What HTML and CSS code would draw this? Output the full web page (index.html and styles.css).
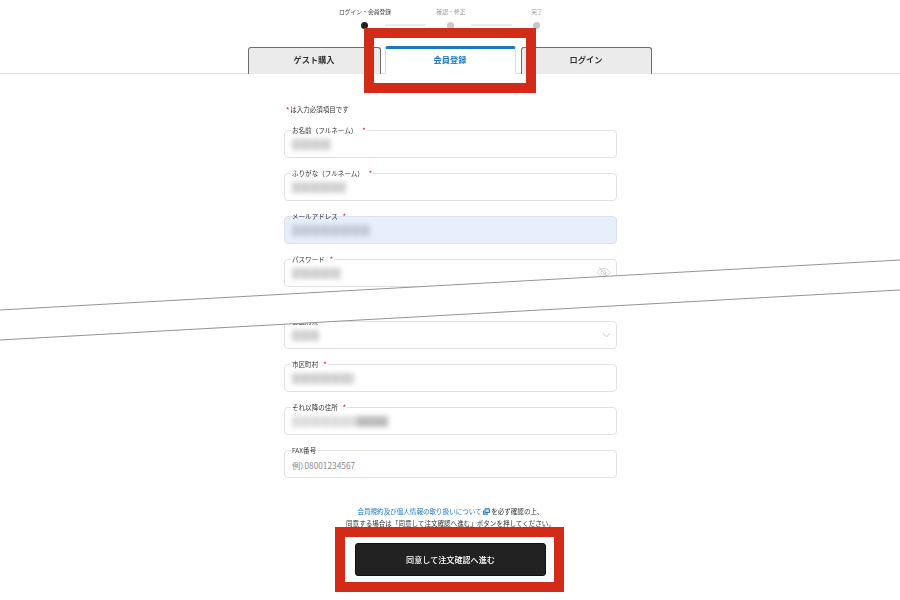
FILE: index.html
```html
<!DOCTYPE html>
<html lang="ja">
<head>
<meta charset="utf-8">
<title>会員登録</title>
<link rel="stylesheet" href="styles.css">
</head>
<body>
<div class="page">
  <div class="steps">
    <div class="step-labels">
      <span class="step-label current">ログイン・会員登録</span>
      <span class="step-label">確認・修正</span>
      <span class="step-label">完了</span>
    </div>
    <div class="step-track">
      <span class="dot current"></span><span class="connector"></span>
      <span class="dot"></span><span class="connector"></span>
      <span class="dot"></span>
    </div>
  </div>

  <div class="tabs">
    <div class="tab tab-guest">ゲスト購入</div>
    <div class="tab tab-active">会員登録</div>
    <div class="tab tab-login">ログイン</div>
  </div>

  <form class="form">
    <p class="note"><span class="req first">*</span>は入力必須項目です</p>

    <div class="field">
      <label class="field-label">お名前（フルネーム）<span class="req gap">*</span></label>
      <div class="smudge s-name"></div>
    </div>
    <div class="field">
      <label class="field-label">ふりがな（フルネーム）<span class="req gap">*</span></label>
      <div class="smudge s-kana"></div>
    </div>
    <div class="field filled">
      <label class="field-label">メールアドレス<span class="req gap">*</span></label>
      <div class="smudge s-mail"></div>
    </div>
    <div class="field">
      <label class="field-label">パスワード<span class="req gap">*</span></label>
      <div class="smudge s-pass"></div>
      <svg class="field-icon eye" viewBox="0 0 16 14" fill="none" stroke="#d0d0d0" stroke-width="1">
        <path d="M1 7c2-3 4.400-4.500 7-4.500S13 4 15 7c-2 3-4.400 4.500-7 4.500S3 10 1 7z"/>
        <circle cx="8" cy="7" r="2.600"/>
        <path d="M3 1l10 12"/>
      </svg>
    </div>

    <div class="field after-cut">
      <label class="field-label">都道府県</label>
      <div class="smudge s-pref"></div>
      <svg class="field-icon chevron" viewBox="0 0 10 6" fill="none" stroke="#bdbdbd" stroke-width="1">
        <path d="M1 1l4 4 4-4"/>
      </svg>
    </div>
    <div class="field">
      <label class="field-label">市区町村<span class="req gap">*</span></label>
      <div class="smudge s-city"></div>
    </div>
    <div class="field">
      <label class="field-label">それ以降の住所<span class="req gap">*</span></label>
      <div class="smudge s-addr"><div class="smudge-dark"></div></div>
    </div>
    <div class="field">
      <label class="field-label">FAX番号</label>
      <span class="placeholder">例）08001234567</span>
    </div>

    <div class="consent">
      <p><a class="consent-link">会員規約及び個人情報の取り扱いについて</a>
        <svg class="ext" viewBox="0 0 8 8" fill="#bcdcf5" stroke="#1a78c2" stroke-width="1.200"><rect x="2.200" y=".8" width="5.200" height="4.400" rx="1"/><path d="M.7 3v4h5" fill="none"/></svg>を必ず確認の上、</p>
      <p>同意する場合は「同意して注文確認へ進む」ボタンを押してください。</p>
    </div>

    <button type="button" class="submit">同意して注文確認へ進む</button>
  </form>
</div>

<div class="mark mark-tab"></div>
<div class="mark mark-button"></div>

<svg class="cut" viewBox="0 0 900 600" width="900" height="600">
  <polygon points="0,310 900,260 900,290 0,340" fill="#fff"/>
  <path d="M0 310L900 260M0 340L900 290" stroke="#949494" stroke-width="1" fill="none"/>
</svg>
</body>
</html>
```
FILE: styles.css
```css
* { box-sizing: border-box; }
html, body { margin: 0; height: 600px; overflow: hidden; background: #fff; }
body { font-family: "Noto Sans CJK JP", "Noto Sans", sans-serif; color: #333; position: relative; }
p { margin: 0; }

.page { display: flex; flex-direction: column; align-items: center; filter: blur(.35px); }

/* stepper */
.steps { width: 258px; padding-top: 8px; height: 46px; margin-left: 2px; }
.step-labels { display: grid; grid-template-columns: repeat(3, 86px); justify-items: center; height: 13px; }
.step-label { font-size: 5.800px; line-height: 8px; color: #999; white-space: nowrap; }
.step-label.current { color: #444; }
.step-track { display: flex; align-items: center; padding-left: 39px; height: 8px; }
.dot { width: 7px; height: 7px; border-radius: 50%; background: #c8c8c8; flex: none; }
.dot.current { background: #222; }
.connector { width: 41px; height: 2px; background: #ececec; margin: 0 21px 0 17px; flex: none; }

/* tabs */
.tabs { width: 100%; display: flex; justify-content: center; align-items: flex-end; height: 28px; border-bottom: 1px solid #e0e0e0; padding-right: 1px; }
.tab { height: 27px; display: flex; align-items: center; justify-content: center; font-size: 8.200px; font-weight: 700; border: 1px solid #6e6e6e; border-bottom: 0; border-radius: 3px 3px 0 0; background: #ebebeb; color: #333; margin-bottom: -1px; padding-bottom: 4px; }
.tab-guest { width: 133px; }
.tab-active { width: 131px; height: 28px; margin-left: 4px; background: #fff; color: #1a78c2; border: 1px solid #ddd; border-top: 3px solid #1a78c2; border-bottom: 0; padding-bottom: 6px; }
.tab-login { width: 131px; margin-left: 5px; }

/* form */
.form { width: 333px; display: flex; flex-direction: column; margin-left: 1px; }
.note { font-size: 6.500px; line-height: 10px; margin: 30px 0 16px 1px; }
.req { color: #ea2a66; font-weight: 700; }
.req.first { margin-right: 1px; margin-left: 1px; }
.req.gap { margin-left: 5px; }

.field { position: relative; height: 28px; margin-bottom: 15px; border: 1px solid #e2e2e2; border-radius: 4px; background: #fff; display: flex; align-items: center; padding-left: 7px; flex: none; }
.field.filled { background: #e8effb; border-color: #dbe1ec; }
.field.after-cut { margin-top: 19px; }
.field-label { position: absolute; left: 6px; top: -5px; font-size: 6.550px; line-height: 8px; padding: 0 1px; background: #fff; white-space: nowrap; color: #333; }
.filled .field-label { background: linear-gradient(#fff 50%, transparent 50%); }
.smudge { height: 11px; background: repeating-linear-gradient(90deg, #d0d0d0 0 7px, #d9d9d9 7px 10px); filter: blur(2.500px); }
.s-name { width: 39px; }
.s-kana { width: 54px; }
.s-mail { width: 78px; background: repeating-linear-gradient(90deg, #c3cad6 0 7px, #cbd1dd 7px 10px); }
.s-pass { width: 49px; }
.s-pref { width: 27px; }
.s-city { width: 62px; }
.s-addr { width: 97px; background: repeating-linear-gradient(90deg, #dcdcdc 0 7px, #e4e4e4 7px 10px); display: flex; justify-content: flex-end; padding-right: 2px; }
.smudge-dark { width: 30px; height: 100%; background: #bcbcbc; }
.placeholder { font-size: 8.300px; line-height: 10px; color: #8c8c8c; margin-top: 1px; font-feature-settings: "palt"; }
.field-icon { position: absolute; }
.eye { right: 5px; top: 6px; width: 15px; height: 13px; }
.chevron { right: 5px; top: 10px; width: 9px; height: 6px; }

/* consent */
.consent { text-align: center; font-size: 6.550px; line-height: 12px; margin-top: 12px; color: #333; }
.consent-link { color: #1a78c2; }
.ext { width: 7px; height: 7px; vertical-align: -1px; margin-right: 1px; }

.submit { align-self: center; width: 191px; height: 33px; margin-top: 14px; background: #222; color: #fff; border: 1px solid #111; border-radius: 3px; font: 500 8.100px "Noto Sans CJK JP", sans-serif; }

/* annotation overlays */
.mark { position: absolute; border: 10px solid #d22b17; }
.mark-tab { left: 364px; top: 28px; width: 172px; height: 65px; }
.mark-button { left: 335px; top: 527px; width: 229px; height: 65px; }

.cut { position: absolute; left: 0; top: 0; pointer-events: none; }
```
